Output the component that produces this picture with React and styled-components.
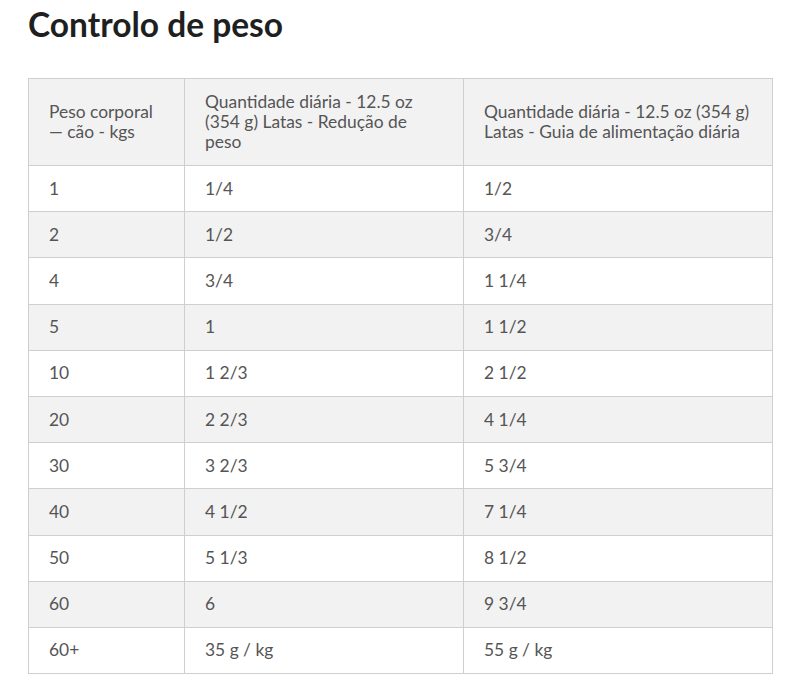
import React from "react";
import styled, { createGlobalStyle } from "styled-components";

const GlobalStyle = createGlobalStyle`
  body {
    margin: 0;
    background: #fff;
    font-family: Lato, "Open Sans", sans-serif;
  }
`;

const rows = [
  ["1", "1/4", "1/2"],
  ["2", "1/2", "3/4"],
  ["4", "3/4", "1 1/4"],
  ["5", "1", "1 1/2"],
  ["10", "1 2/3", "2 1/2"],
  ["20", "2 2/3", "4 1/4"],
  ["30", "3 2/3", "5 3/4"],
  ["40", "4 1/2", "7 1/4"],
  ["50", "5 1/3", "8 1/2"],
  ["60", "6", "9 3/4"],
  ["60+", "35 g / kg", "55 g / kg"],
];

const App = () => {
  return (
    <Page>
      <GlobalStyle />
      <Title>Controlo de peso</Title>
      <Table>
        <colgroup>
          <col style={{ width: 156 }} />
          <col style={{ width: 279 }} />
          <col style={{ width: 309 }} />
        </colgroup>
        <thead>
          <tr>
            <HeadCell>Peso corporal — cão - kgs</HeadCell>
            <HeadCell>
              Quantidade diária - 12.5 oz (354 g) Latas - Redução de peso
            </HeadCell>
            <HeadCell>
              Quantidade diária - 12.5 oz (354 g) Latas - Guia de alimentação
              diária
            </HeadCell>
          </tr>
        </thead>
        <tbody>
          {rows.map((r, i) => (
            <Row key={r[0]} $shaded={i % 2 === 1}>
              {r.map((c, j) => (
                <Cell key={j}>{c}</Cell>
              ))}
            </Row>
          ))}
        </tbody>
      </Table>
    </Page>
  );
};

export default App;

const Page = styled.div`
  padding: 4px 28px 12px;
`;

const Title = styled.h1`
  margin: 0 0 34px;
  font-family: Lato, sans-serif;
  font-weight: 700;
  font-size: 33.5px;
  line-height: 40px;
  color: #1f1f1f;
`;

const Table = styled.table`
  width: 745px;
  border-collapse: collapse;
  table-layout: fixed;
  color: #555;
  font-size: 17.4px;
  line-height: 20px;
`;

const HeadCell = styled.th`
  background: #f2f2f3;
  border: 1px solid #cfcfcf;
  padding: 13px 20px;
  text-align: left;
  vertical-align: middle;
  font-weight: 400;
`;

const Row = styled.tr`
  background: ${(p) => (p.$shaded ? "#f2f2f3" : "#fff")};
`;

const Cell = styled.td`
  border: 1px solid #cfcfcf;
  padding: 12.6px 20px;
  vertical-align: middle;
`;
